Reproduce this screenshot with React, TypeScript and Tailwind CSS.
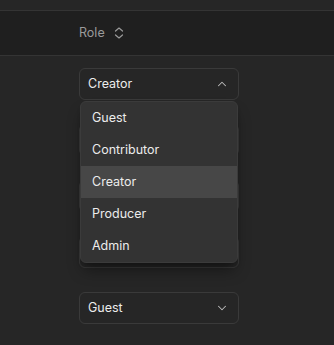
import { ChevronDown, ChevronUp } from 'lucide-react';

const rows = ['Creator', '', '', '', 'Guest'];
const options = ['Guest', 'Contributor', 'Creator', 'Producer', 'Admin'];

function SortIcon() {
  return (
    <svg width="12" height="12" viewBox="0 0 12 12" fill="none" stroke="currentColor" strokeWidth="1.2" strokeLinecap="round" strokeLinejoin="round">
      <path d="M2.5 4 6 1 9.5 4" />
      <path d="M2.5 8 6 11 9.5 8" />
    </svg>
  );
}

function RoleSelect({ value, open }: { value: string; open?: boolean }) {
  return (
    <div className="relative w-[160px]">
      <div className="flex h-8 items-center justify-between rounded-md border border-[#3a3a3a] bg-[#262626] pl-2 pr-[9px] text-[12.5px] text-[#ececec]">
        <span>{value}</span>
        {open ? (
          <ChevronUp className="h-[14px] w-[14px] text-[#bdbdbd]" strokeWidth={1.75} />
        ) : (
          <ChevronDown className="h-[14px] w-[14px] text-[#bdbdbd]" strokeWidth={1.75} />
        )}
      </div>
      {open && (
        <div className="absolute left-[1px] right-[1px] top-full z-10 mt-[1px] overflow-hidden rounded-md border border-[#3b3b3b] bg-[#333333] shadow-lg shadow-black/40">
          {options.map((o) => (
            <div
              key={o}
              className={`flex h-8 items-center pl-[11px] text-[12.5px] text-[#ececec] ${o === value ? 'bg-[#474747]' : ''}`}
            >
              {o}
            </div>
          ))}
        </div>
      )}
    </div>
  );
}

export default function App() {
  return (
    <div className="h-[345px] w-[334px] overflow-hidden bg-[#262626]" style={{ fontFamily: 'Inter, "Noto Sans", sans-serif' }}>
      <div className="h-[11px] border-b border-[#343434] bg-[#262626]" />
      <div className="flex h-[45px] items-center border-b border-[#343434] bg-[#1f1f1f]">
        <div className="w-[79px]" />
        <div className="flex items-center gap-2 text-[12.5px] text-[#9a9a9a]">
          <span>Role</span>
          <SortIcon />
        </div>
      </div>
      {rows.map((r, i) => (
        <div key={i} className="flex h-14 items-center">
          <div className="w-[79px]" />
          <RoleSelect value={r} open={i === 0} />
        </div>
      ))}
    </div>
  );
}
